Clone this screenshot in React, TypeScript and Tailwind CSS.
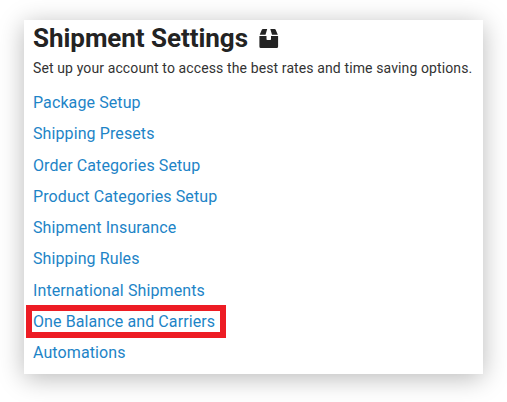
const links = [
  'Package Setup',
  'Shipping Presets',
  'Order Categories Setup',
  'Product Categories Setup',
  'Shipment Insurance',
  'Shipping Rules',
  'International Shipments',
  'One Balance and Carriers',
  'Automations',
];

function BoxIcon() {
  return (
    <svg className="ml-[11px] mt-[9px] h-[19px] w-[20px] shrink-0" viewBox="0 0 20 19" fill="#232323">
      <path d="M4 0H8.2L6.5 5.8H.7L2.7 1Q3 0 4 0Z" />
      <path d="M11.3 0H15.5Q16.5 0 16.8 1L18.8 5.8H13L11.3 0Z" />
      <path d="M.4 7H7.5V10.2Q7.5 11 8.3 11H11.2Q12 11 12 10.2V7H19.1V17.5Q19.1 19 17.7 19H1.8Q.4 19 .4 17.5Z" />
    </svg>
  );
}

export default function App() {
  return (
    <div className="h-[402px] w-[507px] overflow-hidden bg-white pl-6 pt-5 font-['Roboto','Liberation_Sans',sans-serif]">
      <main className="h-[354px] w-[459px] bg-white pl-[9px] shadow-[0_4px_24px_rgba(0,0,0,0.28)]">
        <header className="flex h-[37px] items-start">
          <h1 className="whitespace-nowrap text-[26px] font-bold leading-[36px] tracking-[-0.05px] text-[#232323]">Shipment Settings</h1>
          <BoxIcon />
        </header>
        <p className="h-[30.5px] whitespace-nowrap text-[14px] leading-[23px] tracking-[0.115px] text-[#333]">
          Set up your account to access the best rates and time saving options.
        </p>
        <ul>
          {links.map((label) => (
            <li key={label} className="relative flex h-[31.25px] items-center">
              {label === 'One Balance and Carriers' && (
                <span className="absolute -left-[7px] -top-[1.25px] h-[33px] w-[200px] border-6 border-[#ed1c24]" />
              )}
              <a href="#" className="whitespace-nowrap text-[16px] leading-[24px] tracking-[0.1px] text-[#1d84c7]">{label}</a>
            </li>
          ))}
        </ul>
      </main>
    </div>
  );
}
